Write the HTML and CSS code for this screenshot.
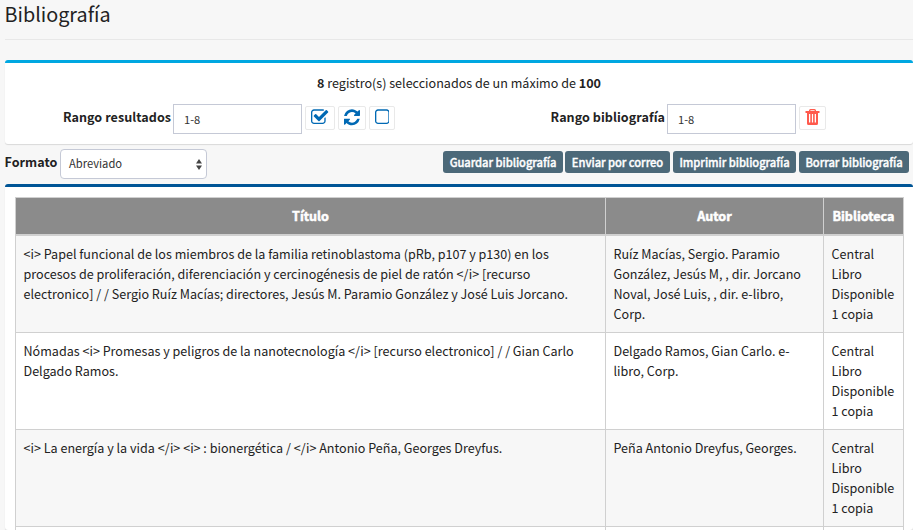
FILE: index.html
```
<!DOCTYPE html>
<html lang="es">
<head>
<meta charset="utf-8">
<title>Bibliografía</title>
<link rel="stylesheet" href="styles.css">
</head>
<body>
<h1>Bibliografía</h1>
<section class="panel selection">
  <p class="summary"><b>8</b> registro(s) seleccionados de un máximo de <b>100</b></p>
  <div class="ranges">
    <div class="range range-results">
      <label for="r1">Rango resultados</label>
      <input id="r1" type="text" value="1-8">
      <button class="icon-btn check" aria-label="Marcar"><svg viewBox="64 0 1664 1792"><path d="M1472 930v318q0 119-84.500 203.500t-203.500 84.500h-832q-119 0-203.500-84.500t-84.500-203.500v-832q0-119 84.500-203.500t203.500-84.500h832q63 0 117 25 15 7 18 23 3 17-9 29l-49 49q-10 10-23 10-3 0-9-2-23-6-45-6h-832q-66 0-113 47t-47 113v832q0 66 47 113t113 47h832q66 0 113-47t47-113v-254q0-13 9-22l64-64q10-10 23-10 6 0 12 3 20 8 20 29zm231-489l-814 814q-24 24-57 24t-57-24l-430-430q-24-24-24-57t24-57l110-110q24-24 57-24t57 24l263 263 647-647q24-24 57-24t57 24l110 110q24 24 24 57t-24 57z"/></svg></button>
      <button class="icon-btn refresh" aria-label="Actualizar"><svg viewBox="128 0 1536 1792"><path d="M1639 1056q0 5-1 7-64 268-268 434.500t-478 166.500q-146 0-282.500-55t-243.500-157l-129 129q-19 19-45 19t-45-19-19-45v-448q0-26 19-45t45-19h448q26 0 45 19t19 45-19 45l-137 137q71 66 161 102t187 36q134 0 250-65t186-179q11-17 53-117 8-23 30-23h192q13 0 22.500 9.500t9.500 22.500zm25-800v448q0 26-19 45t-45 19h-448q-26 0-45-19t-19-45 19-45l138-138q-148-137-349-137-134 0-250 65t-186 179q-11 17-53 117-8 23-30 23h-199q-13 0-22.500-9.500t-9.500-22.500v-7q65-268 270-434.500t480-166.500q146 0 284 55.500t245 156.500l130-129q19-19 45-19t45 19 19 45z"/></svg></button>
      <button class="icon-btn square" aria-label="Desmarcar"><svg viewBox="192 0 1408 1792"><path d="M1312 256h-832q-66 0-113 47t-47 113v832q0 66 47 113t113 47h832q66 0 113-47t47-113v-832q0-66-47-113t-113-47zm288 160v832q0 119-84.500 203.500t-203.500 84.500h-832q-119 0-203.500-84.500t-84.500-203.500v-832q0-119 84.500-203.500t203.500-84.500h832q119 0 203.500 84.500t84.500 203.500z"/></svg></button>
    </div>
    <div class="range range-biblio">
      <label for="r2">Rango bibliografía</label>
      <input id="r2" type="text" value="1-8">
      <button class="icon-btn trash" aria-label="Borrar"><svg viewBox="0 0 15 17"><path fill-rule="evenodd" d="M4 2V1.500Q4 0 5.500 0h4Q11 0 11 1.500V2h3.500v2H13v10.500q0 1.500-1.500 1.500h-8Q2 16 2 14.500V4H.5V2zM5.300 2h4.400v-.3q0-.5-.5-.5H5.800q-.5 0-.5.5zM4 5v8.500h1.300V5zM6.900 5v8.500h1.200V5zM9.700 5v8.500h1.300V5z"/></svg></button>
    </div>
  </div>
</section>
<div class="toolbar">
  <label for="fmt">Formato</label>
  <div class="select" id="fmt"><span>Abreviado</span><svg viewBox="0 0 6 11"><path d="M3 0L6 4.500H0zM3 11L0 6.500h6z"/></svg></div>
  <div class="actions">
    <button>Guardar bibliografía</button>
    <button>Enviar por correo</button>
    <button>Imprimir bibliografía</button>
    <button>Borrar bibliografía</button>
  </div>
</div>
<section class="panel results">
  <table>
    <colgroup><col class="c1"><col class="c2"><col class="c3"></colgroup>
    <thead><tr><th>Título</th><th>Autor</th><th>Biblioteca</th></tr></thead>
    <tbody>
      <tr>
        <td>&lt;i&gt; Papel funcional de los miembros de la familia retinoblastoma (pRb, p107 y p130) en los<br>procesos de proliferación, diferenciación y cercinogénesis de piel de ratón &lt;/i&gt; [recurso<br>electronico] / / Sergio Ruíz Macías; directores, Jesús M. Paramio González y José Luis Jorcano.</td>
        <td>Ruíz Macías, Sergio. Paramio<br>González, Jesús M, , dir. Jorcano<br>Noval, José Luis, , dir. e-libro,<br>Corp.</td>
        <td>Central<br>Libro<br>Disponible<br>1 copia</td>
      </tr>
      <tr>
        <td>Nómadas &lt;i&gt; Promesas y peligros de la nanotecnología &lt;/i&gt; [recurso electronico] / / Gian Carlo<br>Delgado Ramos.</td>
        <td>Delgado Ramos, Gian Carlo. e-<br>libro, Corp.</td>
        <td>Central<br>Libro<br>Disponible<br>1 copia</td>
      </tr>
      <tr>
        <td>&lt;i&gt; La energía y la vida &lt;/i&gt; &lt;i&gt; : bionergética / &lt;/i&gt; Antonio Peña, Georges Dreyfus.</td>
        <td>Peña Antonio Dreyfus, Georges.</td>
        <td>Central<br>Libro<br>Disponible<br>1 copia</td>
      </tr>
      <tr class="next"><td></td><td></td><td></td></tr>
    </tbody>
  </table>
</section>
</body>
</html>
```
FILE: styles.css
```
* { box-sizing: border-box; }
html { overflow: hidden; }
body {
  margin: 0;
  padding-left: 5px;
  height: 530px;
  overflow: hidden;
  background: #f7f7f7;
  color: #222;
  font-family: "Noto Sans CJK JP", "Noto Sans", sans-serif;
  font-size: 12.57px;
  line-height: 20px;
}
h1 {
  margin: 0 0 20px -0.5px;
  height: 40px;
  padding-top: 1px;
  border-bottom: 1px solid #e8e8e8;
  font-size: 19.8px;
  font-weight: 400;
  line-height: 26px;
}
.panel {
  background: #fff;
  border-top: 3px solid #00a7e1;
  border-radius: 3px;
  box-shadow: 0 1px 1px rgba(0, 0, 0, .12);
}
.selection { height: 84px; padding-top: 10px; }
.summary { margin: 0; text-align: center; }
.ranges { display: grid; grid-template-columns: 494px 1fr; margin-top: 11px; }
.range { display: flex; align-items: flex-start; }
label { font-weight: 700; white-space: nowrap; letter-spacing: .05px; }
.range label { padding-top: 3px; text-align: right; }
.range-results label { width: 166px; margin-right: -1px; }
.range-biblio label { width: 166px; margin-right: -1px; }
input {
  width: 129px;
  height: 30px;
  margin: 0 3px;
  padding: 0 10px;
  border: 1px solid #c5c9d6;
  background: #fff;
  color: #333;
  font: 11.2px/16px "Noto Sans CJK JP", sans-serif;
}
.icon-btn {
  display: flex;
  justify-content: center;
  height: 24px;
  margin: 2px 3px 0 0;
  padding: 0;
  border: 1px solid #e9e9e9;
  border-radius: 2px;
  background: #fff;
}
.icon-btn svg { height: 18.67px; margin-top: 1px; fill: #0069b4; }
.check { width: 30px; }
.refresh { width: 28px; }
.square { width: 26px; }
.trash { width: 27px; }
.trash svg { width: 15px; height: 17px; margin-top: 2px; fill: #ff5a4d; }
.toolbar { display: flex; align-items: flex-start; height: 40px; padding-top: 5px; }
.toolbar label { width: 52px; margin: 3px 3px 0 0; text-indent: -0.5px; }
.select {
  display: flex;
  align-items: center;
  justify-content: space-between;
  width: 147px;
  height: 30px;
  padding: 0 4px 0 8px;
  border: 1px solid #c5c9d6;
  border-radius: 4px;
  background: #fff;
  color: #333;
  font-size: 11.2px;
}
.select span { padding-bottom: 2px; }
.select svg { width: 6px; height: 11px; fill: #444; }
.actions { display: flex; gap: 3px; margin: 2px 4px 0 auto; }
.actions button {
  height: 22px;
  padding: 0 0 1px;
  border: 0;
  border-radius: 3px;
  background: #4c6979;
  color: #fff;
  font: 500 11.2px/20px "Noto Sans CJK JP", sans-serif;
  letter-spacing: -.05px;
  -webkit-text-stroke: .35px #fff;
  white-space: nowrap;
}
.actions button:nth-child(1) { width: 120px; margin-right: -1px; }
.actions button:nth-child(2) { width: 105px; }
.actions button:nth-child(3) { width: 123px; }
.actions button:nth-child(4) { width: 110px; }
.results { border-top-color: #005596; padding: 10px 10px 0; height: 346px; overflow: hidden; }
table { width: 889px; table-layout: fixed; border-collapse: collapse; }
.c1 { width: 590px; }
.c2 { width: 218px; }
.c3 { width: 80px; }
th, td { border: 1px solid #d0d0d0; padding: 8px 7.500px; white-space: nowrap; }
th { height: 37px; border-bottom-width: 2px; background: #8b8b8b; color: #fff; font-weight: 700; -webkit-text-stroke: .5px #fff; }
td { height: 97px; vertical-align: top; }
tbody tr:nth-child(odd) { background: #f7f7f7; }
```
